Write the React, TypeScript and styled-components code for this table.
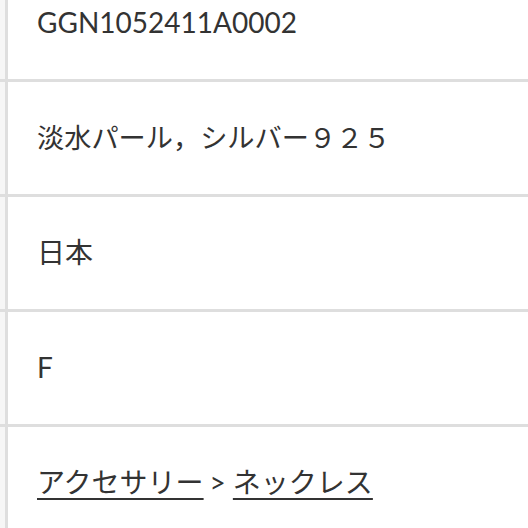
import React from "react";
import styled, { createGlobalStyle } from "styled-components";

const GlobalStyle = createGlobalStyle`
  html, body {
    margin: 0;
    padding: 0;
    background: #fff;
    overflow: hidden;
  }
  body {
    font-family: Lato, "Noto Sans CJK JP", sans-serif;
    color: #333;
  }
`;

const SpecTable = styled.div`
  display: grid;
  grid-template-columns: 8px 1fr;
  margin-top: -33px;
`;

const Label = styled.div`
  background-color: #f6f6f6;
  border-right: 3px solid #dedede;
  border-bottom: 3px solid #dedede;
  min-height: 112px;
`;

const Value = styled.div<{ $size?: number }>`
  display: flex;
  align-items: center;
  min-height: 112px;
  padding-left: 29px;
  border-bottom: 3px solid #dedede;
  font-size: ${(p) => p.$size ?? 28}px;
  line-height: 1.4;
`;

const Crumb = styled.a`
  color: #333;
  text-decoration: underline;
  text-decoration-thickness: 2px;
  text-underline-offset: 5px;
`;

const Sep = styled.span`
  margin: 0 7px 0 6px;
`;

type Row = { value: React.ReactNode; size?: number };

const rows: Row[] = [
  { value: "GGN1052411A0002" },
  { value: "淡水パール，シルバー９２５", size: 27.2 },
  { value: "日本" },
  { value: "F" },
  {
    value: (
      <>
        <Crumb href="#">アクセサリー</Crumb>
        <Sep>&gt;</Sep>
        <Crumb href="#">ネックレス</Crumb>
      </>
    ),
  },
];

export default function App() {
  return (
    <>
      <GlobalStyle />
      <SpecTable role="table">
        {rows.map((row, i) => (
          <React.Fragment key={i}>
            <Label />
            <Value $size={row.size}>{row.value}</Value>
          </React.Fragment>
        ))}
      </SpecTable>
    </>
  );
}
